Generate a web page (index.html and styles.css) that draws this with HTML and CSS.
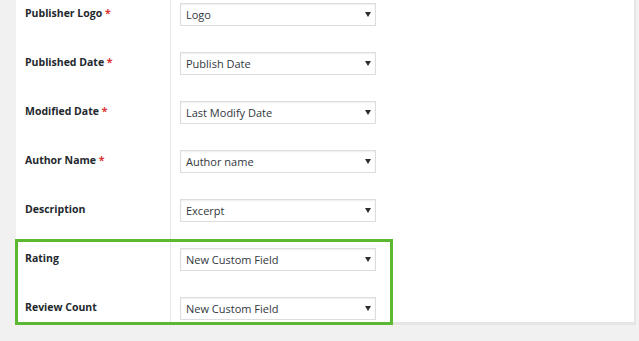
FILE: index.html
```html
<!DOCTYPE html>
<html lang="en">
<head>
  <meta charset="UTF-8">
  <title>Schema Fields</title>
  <link rel="stylesheet" href="styles.css">
</head>
<body>
  <div class="panel">
    <div class="fields">
      <div class="field-row">
        <div class="field-label">Publisher Logo <span class="required">*</span></div>
        <div class="field-input">
          <div class="select"><span>Logo</span><i class="caret"></i></div>
        </div>
      </div>
      <div class="field-row">
        <div class="field-label">Published Date <span class="required">*</span></div>
        <div class="field-input">
          <div class="select"><span>Publish Date</span><i class="caret"></i></div>
        </div>
      </div>
      <div class="field-row">
        <div class="field-label">Modified Date <span class="required">*</span></div>
        <div class="field-input">
          <div class="select"><span>Last Modify Date</span><i class="caret"></i></div>
        </div>
      </div>
      <div class="field-row">
        <div class="field-label">Author Name <span class="required">*</span></div>
        <div class="field-input">
          <div class="select"><span>Author name</span><i class="caret"></i></div>
        </div>
      </div>
      <div class="field-row">
        <div class="field-label">Description</div>
        <div class="field-input">
          <div class="select"><span>Excerpt</span><i class="caret"></i></div>
        </div>
      </div>

      <!-- custom fields, highlighted -->
      <div class="highlight">
        <div class="field-row">
          <div class="field-label">Rating</div>
          <div class="field-input">
            <div class="select"><span>New Custom Field</span><i class="caret"></i></div>
          </div>
        </div>
        <div class="field-row last">
          <div class="field-label">Review Count</div>
          <div class="field-input">
            <div class="select"><span>New Custom Field</span><i class="caret"></i></div>
          </div>
        </div>
      </div>
    </div>
  </div>
</body>
</html>
```

FILE: styles.css
```css
* {
  margin: 0;
  padding: 0;
  box-sizing: border-box;
}

body {
  background-color: #f1f1f1;
  font-family: 'Open Sans', 'Segoe UI', sans-serif;
  color: #23282d;
  height: 341px;
  overflow: hidden;
}

.panel {
  margin-left: 16px;
  width: 620px;
  height: 335px;
  background-color: #ffffff;
  border-right: 2px solid #e5e5e5;
  border-bottom: 3px solid #e5e5e5;
  padding-bottom: 5px;
}

.fields {
  width: 376px;
  margin-top: -10px;
}

.field-row {
  display: grid;
  grid-template-columns: 155px 1fr;
  height: 49px;
}

.field-row.last {
  height: 43px;
}

.field-label {
  height: 100%;
  padding-top: 12px;
  padding-left: 9px;
  font-size: 10.5px;
  font-weight: 700;
  line-height: 23px;
  border-right: 1px solid #e8e8e8;
}

.required {
  color: #dc3232;
}

.field-input {
  padding-top: 13px;
  padding-left: 9px;
}

.select {
  display: flex;
  align-items: center;
  justify-content: space-between;
  width: 196px;
  height: 23px;
  padding: 0 4px 0 5px;
  border: 1px solid #dddddd;
  box-shadow: inset 0 1px 2px rgba(0, 0, 0, 0.07);
  background-color: #ffffff;
  font-size: 11px;
  color: #32373c;
}

.caret {
  width: 0;
  height: 0;
  border-left: 3px solid transparent;
  border-right: 3px solid transparent;
  border-top: 5px solid #2c2c2c;
}

.highlight {
  position: relative;
}

.highlight::after {
  content: '';
  position: absolute;
  top: 4px;
  left: -1px;
  width: 372px;
  bottom: 2px;
  border: 3px solid #5cb832;
  pointer-events: none;
}
```
